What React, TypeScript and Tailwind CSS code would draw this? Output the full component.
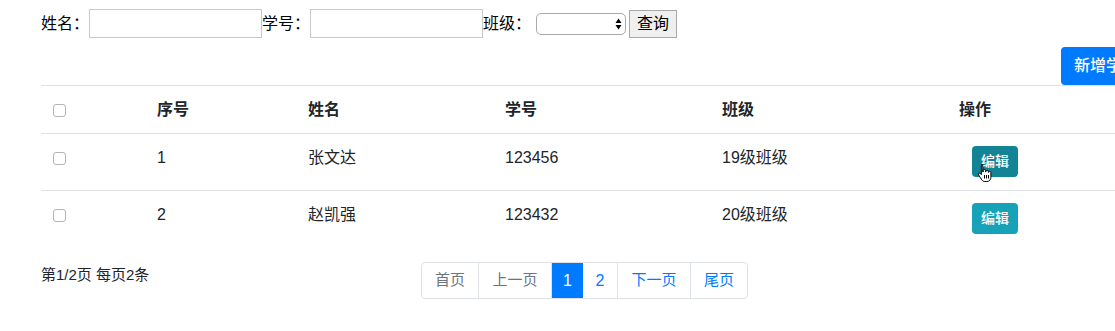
import React from 'react'

interface Student {
  id: number
  name: string
  no: string
  cls: string
}

const students: Student[] = [
  { id: 1, name: '张文达', no: '123456', cls: '19级班级' },
  { id: 2, name: '赵凯强', no: '123432', cls: '20级班级' },
]

const cols = 'grid grid-cols-[104px_151px_197px_217px_237px_1fr]'

function Checkbox() {
  return <span className="block w-[13px] h-[13px] rounded-[3px] border border-[#b4b4b4] bg-white" />
}

function HandCursor() {
  return (
    <svg width="16" height="20" viewBox="0 0 16 20" className="absolute left-[5px] top-[17px]">
      <path
        d="M4.5 1.5c.8 0 1.3.6 1.3 1.3v6.2l.4-.1V7.6c0-.7.5-1.2 1.2-1.2s1.2.5 1.2 1.2v1.3h.3V8.4c0-.7.5-1.2 1.2-1.2s1.2.5 1.2 1.2v1h.3c0-.7.5-1.1 1.1-1.1.7 0 1.2.5 1.2 1.2v4.6c0 2.6-1.6 4.4-4.1 4.4H7.8c-1.3 0-2.3-.6-3-1.6L1.6 12c-.4-.6-.3-1.3.2-1.7.5-.4 1.2-.3 1.6.2l.9 1.1V2.8c0-.7.5-1.3 1.2-1.3z"
        fill="#fff"
        stroke="#000"
        strokeWidth="1"
        strokeLinejoin="round"
      />
      <path d="M7.5 12v3.5M9.5 12v3.5M11.5 12v3.5" stroke="#000" strokeWidth="1" />
    </svg>
  )
}

export default function App() {
  return (
    <div
      className="w-[1115px] h-[331px] overflow-hidden bg-white text-[#212529]"
      style={{ fontFamily: '"Liberation Sans", "Noto Sans CJK SC", sans-serif' }}
    >
      {/* search form */}
      <div className="flex items-center pt-[9px] pl-[41px] text-[16px] text-black">
        <span>姓名：</span>
        <input className="w-[173px] h-[29px] border border-[#c8c8c8] outline-none px-1" />
        <span>学号：</span>
        <input className="w-[173px] h-[29px] border border-[#c8c8c8] outline-none px-1" />
        <span>班级：</span>
        <div className="ml-[5px] w-[90px] h-[22px] rounded-[5px] border border-[#a9a9a9] bg-white flex items-center justify-end pr-[3px]">
          <svg width="7" height="12" viewBox="0 0 7 12">
            <path d="M3.5 0.5L6.5 5H0.5z M3.5 11.5L0.5 7H6.5z" fill="#000" />
          </svg>
        </div>
        <button className="ml-[3px] w-[48px] h-[28px] bg-[#efefef] border border-[#a9a9a9] text-[16px] leading-none">
          查询
        </button>
      </div>

      <div className="ml-[41px] w-[1087px]">
        <div className="flex justify-end mt-[9px] -mr-[23px]">
          <button className="w-[90px] h-[38px] rounded-[4px] bg-[#007bff] text-white text-[16px] font-medium">新增学生</button>
        </div>

        {/* table */}
        <div className="w-[1100px] text-[16px]">
          <div className={`${cols} h-[48px] border-t border-[#dee2e6] font-bold`}>
            <div className="pl-3 pt-[18px]"><Checkbox /></div>
            <div className="px-3 pt-[12px] leading-[24px]">序号</div>
            <div className="px-3 pt-[12px] leading-[24px]">姓名</div>
            <div className="px-3 pt-[12px] leading-[24px]">学号</div>
            <div className="px-3 pt-[12px] leading-[24px]">班级</div>
            <div className="px-3 pt-[12px] leading-[24px]">操作</div>
          </div>
          {students.map((s, i) => (
            <div key={s.id} className={`${cols} ${i === 0 ? 'h-[57px]' : 'h-[56px]'} border-t border-[#dee2e6]`}>
              <div className="pl-3 pt-[18px]"><Checkbox /></div>
              <div className="px-3 pt-[12px] leading-[24px]">{s.id}</div>
              <div className="px-3 pt-[12px] leading-[24px]">{s.name}</div>
              <div className="px-3 pt-[12px] leading-[24px]">{s.no}</div>
              <div className="px-3 pt-[12px] leading-[24px]">{s.cls}</div>
              <div className="pl-[25px] pt-[12px]">
                <div className="relative w-[46px]">
                  <button
                    className={`w-[46px] h-[31px] rounded-[4px] text-white text-[14px] font-medium ${
                      i === 0 ? 'bg-[#138496]' : 'bg-[#17a2b8]'
                    }`}
                  >
                    编辑
                  </button>
                  {i === 0 && <HandCursor />}
                </div>
              </div>
            </div>
          ))}
        </div>

        {/* pagination */}
        <div className="grid grid-cols-[1fr_auto_1fr] mt-[16px]">
          <div className="text-[15px] leading-[26px] text-[#212529]">第1/2页 每页2条</div>
          <div className="flex h-[37px] text-[15px] border border-[#dee2e6] rounded-[4px] overflow-hidden">
            <span className="w-[57px] flex items-center justify-center text-[#6c757d] border-r border-[#dee2e6]">首页</span>
            <span className="w-[73px] flex items-center justify-center text-[#6c757d] border-r border-[#dee2e6]">上一页</span>
            <span className="w-[31px] flex items-center justify-center bg-[#007bff] text-white text-[16px]">1</span>
            <span className="w-[35px] flex items-center justify-center text-[#007bff] border-r border-[#dee2e6] text-[16px]">2</span>
            <span className="w-[73px] flex items-center justify-center text-[#007bff] border-r border-[#dee2e6]">下一页</span>
            <span className="w-[56px] flex items-center justify-center text-[#007bff]">尾页</span>
          </div>
          <div />
        </div>
      </div>
    </div>
  )
}
